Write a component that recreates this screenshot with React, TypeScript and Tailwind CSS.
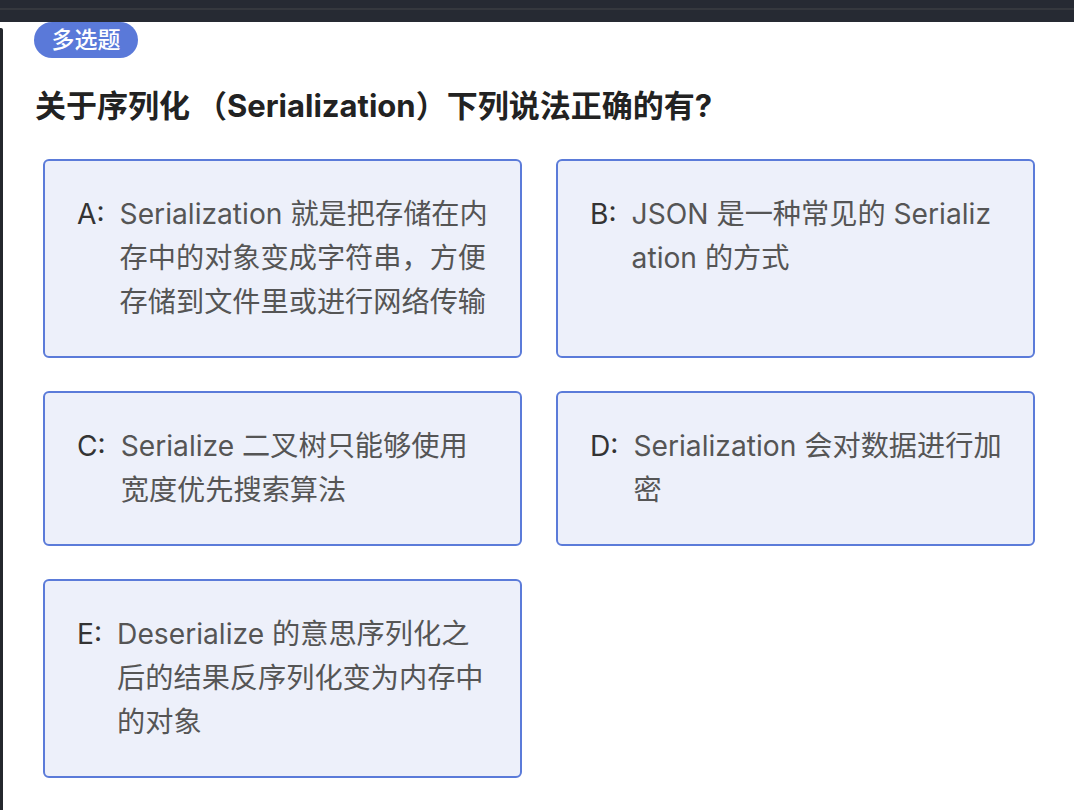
import React from "react";

const options: { label: string; lines: string[] }[] = [
  {
    label: "A:",
    lines: ["Serialization 就是把存储在内", "存中的对象变成字符串，方便", "存储到文件里或进行网络传输"],
  },
  { label: "B:", lines: ["JSON 是一种常见的 Serializ", "ation 的方式"] },
  { label: "C:", lines: ["Serialize 二叉树只能够使用", "宽度优先搜索算法"] },
  { label: "D:", lines: ["Serialization 会对数据进行加", "密"] },
  {
    label: "E:",
    lines: ["Deserialize 的意思序列化之", "后的结果反序列化变为内存中", "的对象"],
  },
];

export default function App() {
  return (
    <div
      className="w-[1074px] h-[810px] bg-white overflow-hidden flex flex-col"
      style={{ fontFamily: 'Inter, "Noto Sans CJK SC", sans-serif' }}
    >
      <div className="h-[22px] bg-[#262a33] flex flex-col shrink-0">
        <div className="h-[8px]" />
        <div className="h-[2px] bg-[#35383e]" />
      </div>
      <div className="flex flex-1">
        <div className="w-[3px] bg-[#24272d] mt-[6px] rounded-tr-[2px]" />
        <div className="flex-1 pl-[31px] flex flex-col">
          <div className="w-[104px] h-[36px] rounded-full bg-[#5a79d9] text-white text-[23px] font-medium flex items-center justify-center leading-none">
            多选题
          </div>
          <div className="mt-[28px] ml-[1px] text-[31px] leading-[40px] font-bold text-[#222]">
            关于序列化<span className="ml-[6px]">（</span>Serialization）下列说法正确的有?
          </div>
          <div className="mt-[33px] ml-[9px] grid grid-cols-[479px_479px] gap-x-[34px] gap-y-[33px]">
            {options.map((o) => (
              <div
                key={o.label}
                className="border-2 border-[#5b7bd9] rounded-[6px] bg-[#edf0fa] pl-[32px] pr-[20px] pt-[31px] pb-[32px] flex text-[28.2px] leading-[44px]"
              >
                <div className="text-[#333] mr-[15px] whitespace-nowrap">{o.label}</div>
                <div className="text-[#555] whitespace-nowrap">
                  {o.lines.map((l, i) => (
                    <div key={i}>{l}</div>
                  ))}
                </div>
              </div>
            ))}
          </div>
        </div>
      </div>
    </div>
  );
}
